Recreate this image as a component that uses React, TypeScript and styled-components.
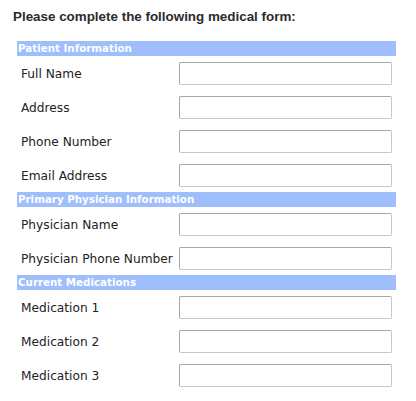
import React from "react";
import styled, { createGlobalStyle } from "styled-components";

const Global = createGlobalStyle`
  html, body { margin: 0; padding: 0; background: #ffffff; }
`;

const Page = styled.div`
  padding: 9px 0 0 13px;
  width: 383px;
`;

const Heading = styled.h1`
  margin: 0 0 16px 0;
  font-family: "Liberation Sans", Arial, sans-serif;
  font-weight: bold;
  font-size: 13.4px;
  line-height: 16px;
  color: #2b2b2b;
`;

const Form = styled.form`
  display: flex;
  flex-direction: column;
  margin-left: 4px;
  width: 379px;
`;

const SectionBar = styled.div`
  height: 15px;
  background: #9ebefc;
  color: #ffffff;
  font-family: "DejaVu Sans", Verdana, sans-serif;
  font-weight: bold;
  font-size: 10.3px;
  line-height: 15px;
  padding-left: 1px;
  margin-bottom: 6px;
`;

const Row = styled.div<{ $last?: boolean }>`
  display: flex;
  align-items: center;
  justify-content: space-between;
  height: 23px;
  margin-bottom: ${(p) => (p.$last ? "5px" : "11px")};
`;

const Label = styled.label`
  padding-left: 4px;
  font-family: "DejaVu Sans", Verdana, sans-serif;
  font-size: 12.2px;
  color: #222;
  white-space: nowrap;
`;

const Input = styled.input`
  box-sizing: border-box;
  width: 213px;
  height: 23px;
  margin: 0 4px 0 0;
  border: 1px solid #c8c8c8;
  border-top-color: #a8a8a8;
  border-left-color: #a8a8a8;
  border-radius: 2px;
  background: #fff;
  padding: 0 3px;
  outline: none;
`;

const sections: { title: string; fields: string[] }[] = [
  {
    title: "Patient Information",
    fields: ["Full Name", "Address", "Phone Number", "Email Address"],
  },
  {
    title: "Primary Physician Information",
    fields: ["Physician Name", "Physician Phone Number"],
  },
  {
    title: "Current Medications",
    fields: ["Medication 1", "Medication 2", "Medication 3"],
  },
];

export default function App() {
  return (
    <Page>
      <Global />
      <Heading>Please complete the following medical form:</Heading>
      <Form>
        {sections.map((s) => (
          <React.Fragment key={s.title}>
            <SectionBar>{s.title}</SectionBar>
            {s.fields.map((f, i) => (
              <Row key={f} $last={i === s.fields.length - 1}>
                <Label>{f}</Label>
                <Input type="text" aria-label={f} />
              </Row>
            ))}
          </React.Fragment>
        ))}
      </Form>
    </Page>
  );
}
